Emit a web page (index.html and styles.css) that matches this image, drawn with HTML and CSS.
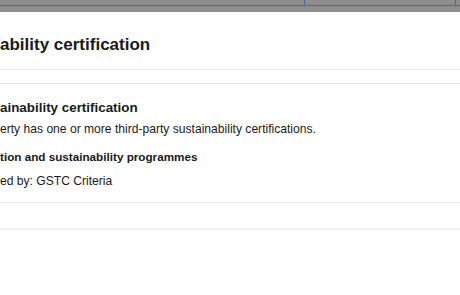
FILE: index.html
```html
<!DOCTYPE html>
<html lang="en">
<head>
<meta charset="UTF-8">
<meta name="viewport" content="width=device-width, initial-scale=1.0">
<title>Sustainability certification</title>
<link rel="stylesheet" href="styles.css">
</head>
<body>

<div class="backdrop">
    <div class="tabs">
        <div class="tab tab-main"></div>
        <div class="tab tab-side"></div>
    </div>
</div>

<div class="modal">
    <div class="modal-header">
        <h1>ability certification</h1>
    </div>

    <div class="modal-body">
        <h2>ainability certification</h2>
        <p>erty has one or more third-party sustainability certifications.</p>
        <h3>tion and sustainability programmes</h3>
        <p>ed by: GSTC Criteria</p>
    </div>

    <div class="modal-footer"></div>
</div>

</body>
</html>
```

FILE: styles.css
```css
body {
    font-family: "Liberation Sans", Arial, sans-serif;
    background-color: #ffffff;
    color: #1a1a1a;
    margin: 0;
    padding: 0;
}

.backdrop {
    height: 12px;
    background-color: #8e8e8e;
}

.tabs {
    display: flex;
    height: 5px;
    border-bottom: 1px solid #4b6a97;
}

.tab-main {
    width: 304px;
    border-right: 1px solid #4b6a97;
}

.tab-side {
    width: 150px;
    border-right: 1px solid #4b6a97;
}

.modal-header {
    padding: 21px 0 12px 0;
    border-bottom: 1px solid #e7e7e7;
}

h1 {
    font-size: 17px;
    line-height: 24px;
    font-weight: 700;
    margin: 0;
}

.modal-body {
    margin-top: 13px;
    padding: 14px 0 12px 0;
    border-top: 1px solid #e7e7e7;
    border-bottom: 1px solid #e7e7e7;
}

h2 {
    font-size: 13.4px;
    line-height: 19px;
    margin: 0 0 3px 0;
}

h3 {
    font-size: 11.7px;
    line-height: 18px;
    margin: 10px 0 6px 0;
}

p {
    font-size: 12.1px;
    line-height: 18px;
    margin: 0;
}

.modal-footer {
    height: 25px;
    border-bottom: 2px solid #f2f2f2;
}
```
